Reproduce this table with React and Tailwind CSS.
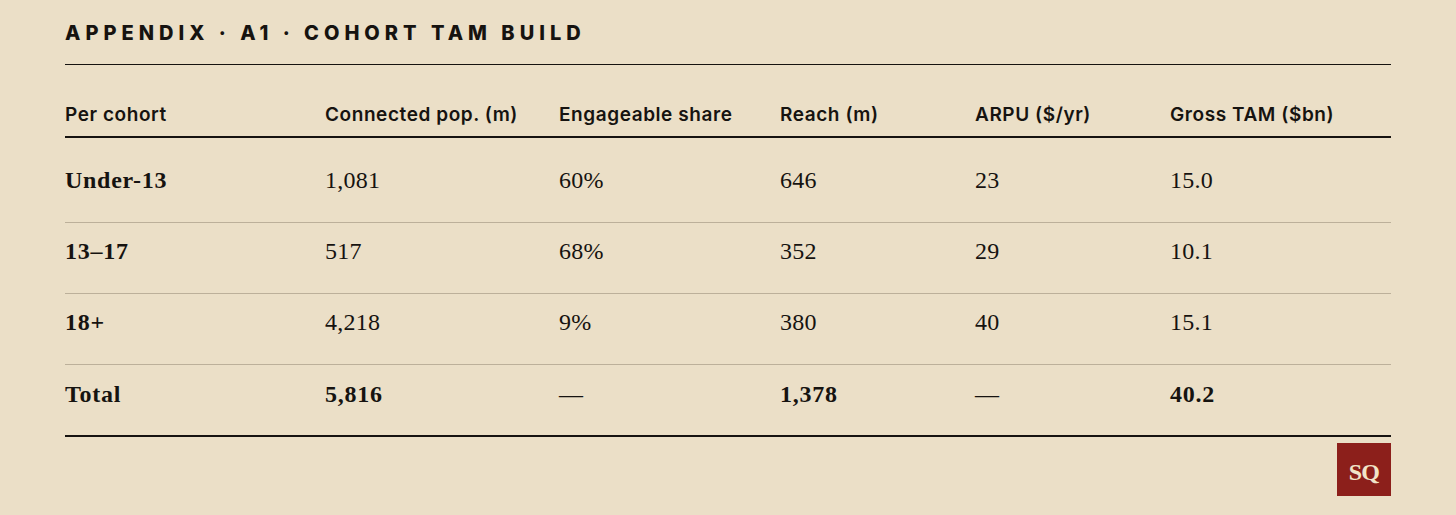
import React from "react";

const cols = "grid grid-cols-[260px_234px_221px_195px_195px_1fr]";

const rows = [
  { label: "Under-13", cells: ["1,081", "60%", "646", "23", "15.0"] },
  { label: "13–17", cells: ["517", "68%", "352", "29", "10.1"] },
  { label: "18+", cells: ["4,218", "9%", "380", "40", "15.1"] },
];

const headers = [
  "Per cohort",
  "Connected pop. (m)",
  "Engageable share",
  "Reach (m)",
  "ARPU ($/yr)",
  "Gross TAM ($bn)",
];

const App = () => {
  return (
    <div className="w-full h-[515px] bg-[#ebdfc7] text-[#161310] px-[65px] pt-[21px] overflow-hidden">
      <h1 className="font-['Inter',sans-serif] font-extrabold text-[20px] leading-[24px] tracking-[0.25em]">
        APPENDIX · A1 · COHORT TAM BUILD
      </h1>

      <div className="mt-[19px] border-t-[1.5px] border-[#161310]"></div>

      {/* header */}
      <div className={`${cols} pt-[39px] pb-[10px] border-b-2 border-[#161310] font-['Inter',sans-serif] font-semibold text-[19px] leading-[22px] tracking-[0.03em]`}>
        {headers.map((h) => (
          <div key={h}>{h}</div>
        ))}
      </div>

      {/* body */}
      <div className="font-['Liberation_Serif',serif] text-[24px] leading-[28px] tracking-[0.01em]">
        {rows.map((r, i) => (
          <div
            key={r.label}
            className={`${cols} border-b border-[#bcb09a] ${i === 0 ? "pt-[28px] pb-[28px]" : "pt-[14px] pb-[28px]"}`}
          >
            <div className="font-bold tracking-[0.03em]">{r.label}</div>
            {r.cells.map((c, j) => (
              <div key={j}>{c}</div>
            ))}
          </div>
        ))}
        <div className={`${cols} pt-[15px] pb-[27px] border-b-2 border-[#161310]`}>
          <div className="font-bold tracking-[0.03em]">Total</div>
          <div className="font-bold tracking-[0.03em]">5,816</div>
          <div>—</div>
          <div className="font-bold tracking-[0.03em]">1,378</div>
          <div>—</div>
          <div className="font-bold tracking-[0.03em]">40.2</div>
        </div>
      </div>

      <div className="flex justify-end mt-[6px]">
        <div className="w-[54px] h-[53px] bg-[#8c1f1b] flex items-center justify-center pt-[5px] font-['Liberation_Serif',serif] font-bold text-[24px] text-[#f1e4c9] tracking-[-0.03em]">
          SQ
        </div>
      </div>
    </div>
  );
};

export default App;
